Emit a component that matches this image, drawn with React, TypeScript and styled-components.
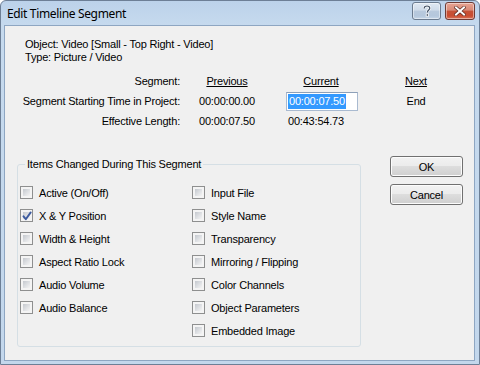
import React from "react";
import styled, { createGlobalStyle } from "styled-components";

const Global = createGlobalStyle`
  html, body { margin: 0; padding: 0; background: #ffffff; }
  body { width: 480px; height: 365px; overflow: hidden; }
`;

const Window = styled.div`
  box-sizing: border-box;
  width: 480px;
  height: 365px;
  display: flex;
  flex-direction: column;
  background: linear-gradient(#bcd2ea, #c6daee 25px, #c3d7ec);
  border: 1px solid #6d7f96;
  border-radius: 6px 6px 0 0;
  font-family: "Liberation Sans", Arial, sans-serif;
  font-size: 11px;
  letter-spacing: -0.2px;
  color: #000;
`;

const TitleBar = styled.div`
  height: 24px;
  display: flex;
  align-items: center;
  padding: 0 4px 0 6px;
  flex: none;
`;

const Title = styled.div`
  flex: 1;
  font-family: "Noto Sans", "Open Sans", sans-serif;
  font-size: 12px;
  letter-spacing: -0.35px;
  color: #000;
  margin-top: 0px;
`;

const CaptionButton = styled.div<{ $close?: boolean }>`
  box-sizing: border-box;
  width: ${(p) => (p.$close ? 30 : 29)}px;
  height: 18px;
  margin-left: ${(p) => (p.$close ? 4 : 0)}px;
  margin-top: -4px;
  border: 1px solid ${(p) => (p.$close ? "#6e3b35" : "#6b7b8f")};
  border-radius: 3px;
  display: flex;
  align-items: center;
  justify-content: center;
  background: ${(p) =>
    p.$close
      ? "linear-gradient(#e8a493, #d98a77 45%, #c55237 50%, #c94d31 80%, #d8745a)"
      : "linear-gradient(#dfe8f3, #cfdbe9 45%, #b8c9dd 50%, #b5c7dc 80%, #c6d6e8)"};
  box-shadow: inset 0 0 0 1px rgba(255, 255, 255, 0.45);
`;

const Client = styled.div`
  flex: 1;
  margin: 0 4px 3px 3px;
  background: #f0f0f0;
  border: 1px solid #8ea6c2;
  display: flex;
  flex-direction: column;
`;

const Info = styled.div`
  padding: 12px 0 0 20px;
  line-height: 13px;
`;

const Table = styled.div`
  margin-top: 7px;
  display: grid;
  grid-template-columns: 175px 94px 94px 96px;
  grid-auto-rows: 20px;
  align-items: center;
`;

const RowLabel = styled.div`
  text-align: right;
`;

const Heading = styled.div`
  text-align: center;
  text-decoration: underline;
`;

const Value = styled.div<{ $left?: boolean }>`
  text-align: ${(p) => (p.$left ? "left" : "center")};
  padding-left: ${(p) => (p.$left ? 14 : 0)}px;
`;

const TimeInput = styled.div`
  box-sizing: border-box;
  width: 72px;
  height: 19px;
  margin-left: 12px;
  border: 1px solid #a9bad0;
  border-top-color: #8ea0b8;
  background: #fff;
  display: flex;
  align-items: center;
  padding-left: 1px;
`;

const Selected = styled.span`
  background: #3399ff;
  color: #fff;
  line-height: 15px;
  padding: 0 1px;
`;

const Bottom = styled.div`
  display: flex;
  align-items: flex-start;
  margin-top: 27px;
  padding-left: 12px;
`;

const Buttons = styled.div`
  margin-left: 29px;
  margin-top: -2px;
  display: flex;
  flex-direction: column;
  gap: 7px;
`;

const Group = styled.fieldset`
  box-sizing: border-box;
  width: 344px;
  height: 189px;
  margin: 0;
  padding: 15px 0 0 2px;
  border: 1px solid #d5dfe5;
  border-radius: 3px;
  display: grid;
  grid-template-columns: 172px 1fr;
  align-items: start;
`;

const Legend = styled.legend`
  padding: 0 2px;
  margin-left: 5px;
  line-height: 13px;
`;

const Column = styled.div`
  display: flex;
  flex-direction: column;
  gap: 10px;
`;

const Option = styled.label`
  display: flex;
  align-items: center;
  height: 13px;
  gap: 6px;
  white-space: nowrap;
`;

const Box = styled.span`
  box-sizing: border-box;
  width: 13px;
  height: 13px;
  flex: none;
  border: 1px solid #8e8f8f;
  background: #f4f4f4;
  padding: 2px;
  display: flex;
`;

const BoxInner = styled.span`
  flex: 1;
  position: relative;
  background: linear-gradient(135deg, #c4c8ce, #dfe1e4 55%, #f4f4f4);
`;

const Check = styled.svg`
  position: absolute;
  left: -2px;
  top: -2px;
`;

const Button = styled.button`
  box-sizing: border-box;
  width: 73px;
  height: 21px;
  border: 1px solid #707070;
  border-radius: 3px;
  background: linear-gradient(#f2f2f2, #ebebeb 50%, #dddddd 50%, #cfcfcf);
  box-shadow: inset 0 0 0 1px #fcfcfc;
  font-family: "Liberation Sans", Arial, sans-serif;
  font-size: 11px;
  letter-spacing: -0.2px;
  color: #000;
  padding: 0;
`;

const left = [
  { label: "Active (On/Off)", checked: false },
  { label: "X & Y Position", checked: true },
  { label: "Width & Height", checked: false },
  { label: "Aspect Ratio Lock", checked: false },
  { label: "Audio Volume", checked: false },
  { label: "Audio Balance", checked: false },
];

const right = [
  "Input File",
  "Style Name",
  "Transparency",
  "Mirroring / Flipping",
  "Color Channels",
  "Object Parameters",
  "Embedded Image",
];

function CheckBox({ checked }: { checked?: boolean }) {
  return (
    <Box>
      <BoxInner>
        {checked && (
          <Check width="13" height="13" viewBox="0 0 13 13">
            <path
              d="M2.5 6.3 L4.8 9.2 L9.7 2.4"
              fill="none"
              stroke="#3c5a9e"
              strokeWidth="1.9"
              strokeLinecap="round"
              strokeLinejoin="round"
            />
          </Check>
        )}
      </BoxInner>
    </Box>
  );
}

export default function App() {
  return (
    <>
      <Global />
      <Window>
        <TitleBar>
          <Title>Edit Timeline Segment</Title>
          <CaptionButton>
            <svg width="10" height="12" viewBox="0 0 10 12">
              <path
                d="M2.2 3.6 C2.2 1.6 3.6 1 5 1 C6.6 1 7.8 1.9 7.8 3.3 C7.8 5 5.4 5.2 5.4 7.4"
                fill="none"
                stroke="#fff"
                strokeWidth="2.6"
              />
              <path
                d="M2.2 3.6 C2.2 1.6 3.6 1 5 1 C6.6 1 7.8 1.9 7.8 3.3 C7.8 5 5.4 5.2 5.4 7.4"
                fill="none"
                stroke="#3f4e63"
                strokeWidth="1.2"
              />
              <rect x="4.2" y="8.8" width="2.4" height="2.4" fill="#3f4e63" stroke="#fff" strokeWidth="0.8" />
            </svg>
          </CaptionButton>
          <CaptionButton $close>
            <svg width="12" height="10" viewBox="0 0 12 10">
              <path d="M2 1.5 L10 8.5 M10 1.5 L2 8.5" stroke="#5b2a22" strokeWidth="3.4" strokeLinecap="square" />
              <path d="M2 1.5 L10 8.5 M10 1.5 L2 8.5" stroke="#fff" strokeWidth="2" strokeLinecap="square" />
            </svg>
          </CaptionButton>
        </TitleBar>
        <Client>
          <Info>
            <div>Object: Video [Small - Top Right - Video]</div>
            <div>Type: Picture / Video</div>
          </Info>
          <Table>
            <RowLabel>Segment:</RowLabel>
            <Heading>Previous</Heading>
            <Heading>Current</Heading>
            <Heading>Next</Heading>

            <RowLabel>Segment Starting Time in Project:</RowLabel>
            <Value>00:00:00.00</Value>
            <TimeInput>
              <Selected>00:00:07.50</Selected>
            </TimeInput>
            <Value>End</Value>

            <RowLabel>Effective Length:</RowLabel>
            <Value>00:00:07.50</Value>
            <Value $left>00:43:54.73</Value>
            <div />
          </Table>
          <Bottom>
            <Group>
              <Legend>Items Changed During This Segment</Legend>
              <Column>
                {left.map((o) => (
                  <Option key={o.label}>
                    <CheckBox checked={o.checked} />
                    {o.label}
                  </Option>
                ))}
              </Column>
              <Column>
                {right.map((l) => (
                  <Option key={l}>
                    <CheckBox />
                    {l}
                  </Option>
                ))}
              </Column>
            </Group>
            <Buttons>
              <Button>OK</Button>
              <Button>Cancel</Button>
            </Buttons>
          </Bottom>
        </Client>
      </Window>
    </>
  );
}
